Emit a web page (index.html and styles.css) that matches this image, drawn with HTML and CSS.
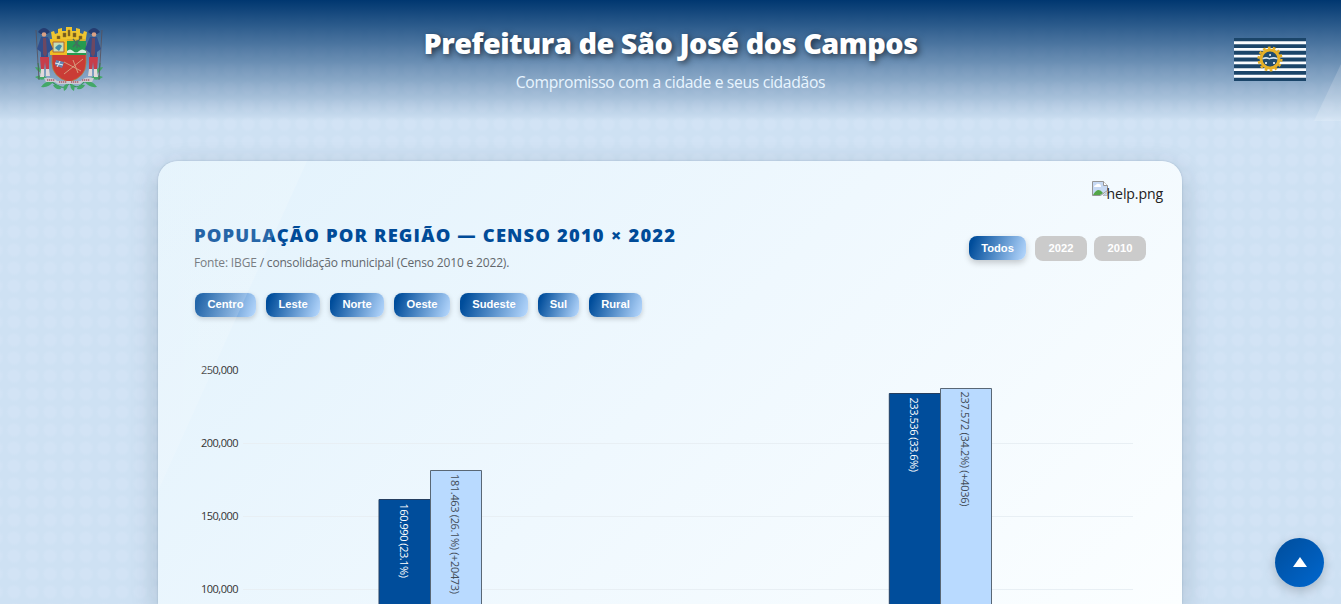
FILE: index.html
```html
<!DOCTYPE html>
<html lang="pt-BR">
<head>
<meta charset="utf-8">
<title>Prefeitura de São José dos Campos</title>
<link rel="stylesheet" href="styles.css">
</head>
<body>
<header class="header">
  <svg class="crest" viewBox="0 0 68 66" aria-label="Brasão">
    <path d="M3 37Q5 53 17 56Q30 66 34 57Q42 65 49 56Q64 54 65 37" fill="none" stroke="#35975c" stroke-width="1.2"/>
    <g fill="#43a868"><path d="M0 41q7 0 8 6q-6-1-8-6M0 51q8-4 12 1q-6 4-12-1M6 61q5-7 12-5q-4 6-12 5M18 59q7-1 8 4q-6 1-8-4M68 41q-7 0-8 6q6-1 8-6M68 51q-8-4-12 1q6 4 12-1M62 61q-5-7-12-5q4 6 12 5M50 59q-7-1-8 4q6 1 8-4M29 65q-2-6 3-7q2 4-3 7M39 65q2-6-3-7q-2 4 3 7"/></g>
    <path d="M18 18L16 6l3-1 1 3 3-1V3l4-1v3h4V1h6v4h4V2l4 1v4l3 1 1-3 3 1-2 12z" fill="#eec530"/>
    <path d="M22 10h3v3h-3zM28 7h3v4h-3zM33 4h2v6h-2zM38 7h3v4h-3zM44 10h3v3h-3zM19 14h31" fill="#725820" stroke="#987822" stroke-width=".5"/>
    <path d="M17 16h34v21q0 14-17 19q-17-5-17-19z" fill="#ca3c36" stroke="#b2863b" stroke-width=".7"/>
    <path d="M15 13h17v16H15z" fill="#f1bd24"/><path d="M18 16h11v10H18z" fill="#c7deb5" stroke="#aa6334"/><path d="M20 22q4-6 7-2l-3 5z" fill="#3f8cab"/>
    <path d="M32 15h19v14H32z" fill="#269b50"/><path d="M32 25q3-3 6 0t6 0t7 0v2H32z" fill="#d5ecdf"/><path d="M38 13l7 8M45 13l-7 8M42 14v8" stroke="#466c60" stroke-width="1.2"/>
    <path d="M29 36l17 9M48 33L29 48M38 34l5 13" stroke="#d79b7c"/><path d="M21 34l8 2-2 6-7-3z" fill="#6485b2"/><path d="M25 35l-3 6M20 37l8 2" stroke="#e9edf0"/>
    <g id="guard"><path d="M1 4l3 50" stroke="#594f58" stroke-width=".8"/><path d="M3 6q6-8 12 0l-3 2H6z" fill="#253c71"/><circle cx="9" cy="8.5" r="2.3" fill="#dba184"/><path d="M6 11h7l5 12-5 4v6H6v-7l-4-3z" fill="#314f8c"/><path d="M8 12h3l1 16-2 3-2-3z" fill="#6d4861"/><path d="M5 31h9v12l-3 1-1-8-1 8H6z" fill="#c73d4b"/><path d="M6 43h3v8H5zM11 43h3l1 7h-4z" fill="#e1d9d9"/></g>
    <use href="#guard" transform="matrix(-1 0 0 1 68 0)"/>
    <path d="M9 52q10-1 13 3h24q3-5 13-3l-2 4H48l-3 2H23l-3-2H11z" fill="#c9cbd2"/><path d="M12 54h8M24 56h8M36 56h8M47 54h8" stroke="#ad5968" stroke-width="1.5" stroke-dasharray="1.3 .7"/>
  </svg>
  <div class="heading">
    <h1>Prefeitura de São José dos Campos</h1>
    <p>Compromisso com a cidade e seus cidadãos</p>
  </div>
  <svg class="flag" viewBox="0 0 72 43" aria-label="Bandeira">
    <path d="M0 0h72v43H0z" fill="#1b4569"/>
    <path d="M0 4.75h72M0 11.45h72M0 18.15h72M0 24.85h72M0 31.55h72M0 38.25h72" stroke="#fafcff" stroke-width="2.8"/>
    <circle cx="36" cy="21" r="11.4" fill="none" stroke="#e6b027" stroke-width="2.3" stroke-dasharray="2.7 2.42"/>
    <circle cx="36" cy="21" r="9" fill="#204b6e" stroke="#e6b027" stroke-width="3"/>
    <path d="M28.5 20q3.5-2 7 0q4-2 8 0v1.5q-4-1.5-8 0q-3-1.5-7 0z" fill="#d8e5ee"/>
    <path d="M35.2 16h1.8v2h-1.8zM31 24h2v2h-2zM39 24h2v2h-2z" fill="#cddae4"/>
  </svg>
</header>
<main class="card">
  <div class="help">
    <svg class="broken" viewBox="0 0 16 16"><path d="M.5 .5h11l4 4v5l-7 5h-8z" fill="#c6d9f4" stroke="#969696"/><path d="M11.5.5v4h4" fill="#fff" stroke="#969696"/><path d="M2 6q0-2 2-2q1-2 3-1q2 0 2 3z" fill="#fff"/><path d="M1 14q5-9 10-2l-3 2H1z" fill="#53a647"/><path d="M15.5 11v3.500H11z" fill="#c6d9f4" stroke="#969696" stroke-width=".5"/></svg><span>help.png</span>
  </div>
  <div class="top">
    <div>
      <h2>POPULAÇÃO POR REGIÃO — CENSO 2010 × 2022</h2>
      <p class="source">Fonte: IBGE / consolidação municipal (Censo 2010 e 2022).</p>
    </div>
    <div class="years"><button class="active">Todos</button><button>2022</button><button>2010</button></div>
  </div>
  <div class="regions">
    <button style="width:61px">Centro</button><button style="width:54px">Leste</button><button style="width:54px">Norte</button><button style="width:56px">Oeste</button><button style="width:68px">Sudeste</button><button style="width:41px">Sul</button><button style="width:53px">Rural</button>
  </div>
  <svg class="chart" viewBox="194 340 952 264">
    <path d="M243 443.5h890M243 516.5h890M243 589.5h890" stroke="#e8eff4"/>
    <g class="axis">
      <text x="201" y="374" textLength="37.5">250,000</text><text x="201" y="447" textLength="37.5">200,000</text>
      <text x="201" y="520" textLength="37.5">150,000</text><text x="201" y="593" textLength="37.5">100,000</text>
    </g>
    <g fill="#004d9b" stroke="#243e60"><path d="M379 499.500h51.500V650H379zM889.300 393.500h51.200V650H889.300z"/></g>
    <g fill="#b9daff" stroke="#596775"><path d="M430.500 470.500h51V650h-51zM940.500 388.500h51V650h-51z"/></g>
    <g class="values">
      <text class="light" transform="translate(400 503.500) rotate(90)" textLength="74.5">160.990 (23.1%)</text>
      <text transform="translate(451 474) rotate(90)" textLength="120">181.463 (26.1%) (+20473)</text>
      <text class="light" transform="translate(910 397.500) rotate(90)" textLength="74.5">233.536 (33.6%)</text>
      <text transform="translate(961 391.500) rotate(90)" textLength="115">237.572 (34.2%) (+4036)</text>
    </g>
  </svg>
</main>
<button class="to-top" aria-label="Voltar ao topo"><svg viewBox="0 0 14 10"><path d="M7 0l7 10H0z" fill="#fff"/></svg></button>
</body>
</html>
```
FILE: styles.css
```css
* { box-sizing: border-box; }
body {
  margin: 0;
  font-family: "Open Sans", "Noto Sans", sans-serif;
  color: #222;
  background: radial-gradient(circle, #d2e3f5 5px, #cee1f3 8px) 5px 7px / 18px 18px;
}
h1, h2, p { margin: 0; white-space: nowrap; }
.header {
  position: relative;
  height: 121px;
  padding: 0 35px;
  display: grid;
  grid-template-columns: 72px 1fr 72px;
  align-items: start;
  background: linear-gradient(#003770, rgba(0, 55, 112, 0));
}
.header::after {
  content: "";
  position: absolute;
  right: 0;
  top: 64px;
  width: 27px;
  height: 57px;
  background: rgba(255, 255, 255, .17);
  clip-path: polygon(100% 0, 100% 100%, 0 100%);
}
.crest { width: 68px; height: 66px; margin-top: 26px; }
.flag { width: 72px; height: 43px; margin-top: 38px; }
.heading { text-align: center; color: #fff; padding-top: 23px; }
.heading h1 { font-size: 28.8px; line-height: 40px; font-weight: 800; letter-spacing: -.46px; text-shadow: 2px 2px 6px rgba(0, 0, 0, .6); }
.heading p { margin-top: 7px; font-size: 15.7px; line-height: 24px; color: #e9f5ff; letter-spacing: -.32px; }
.card {
  position: relative;
  width: 1024px;
  height: 443px;
  margin: 40px 0 0 158px;
  padding: 20px 36px 0;
  border-radius: 20px 20px 0 0;
  background: linear-gradient(135deg, #e2f2fc 0%, #eff8fe 50%, #fbfeff 100%);
  box-shadow: 0 8px 28px rgba(0, 35, 60, .2), 0 0 2px rgba(0, 40, 70, .2);
}
.card::after {
  content: "";
  position: absolute;
  left: 0;
  top: 0;
  width: 149px;
  height: 330px;
  border-radius: 20px 0 0;
  background: linear-gradient(90deg, rgba(255, 255, 255, .13), rgba(255, 255, 255, .17));
  clip-path: polygon(0 0, 100% 0, 0 100%);
}
.help { height: 24px; margin-right: -17px; display: flex; justify-content: flex-end; font-size: 14.1px; line-height: 25px; letter-spacing: -.12px; }
.broken { width: 16px; height: 16px; margin-right: -1px; }
.top { display: flex; justify-content: space-between; height: 85px; }
h2 { margin-top: 17px; font-size: 18.4px; line-height: 26px; font-weight: 800; letter-spacing: 1.14px; color: #004b98; }
.source { margin-top: 6px; font-size: 12px; line-height: 18px; color: #62676c; letter-spacing: -.17px; }
button {
  padding: 0 0 2px;
  border: 0;
  border-radius: 8px;
  font: bold 11.2px "Liberation Sans", Arial, sans-serif;
  color: #fff;
}
.years { display: flex; gap: 7px; padding-top: 31px; }
.years button { width: 52px; height: 25px; background: #cbcbcb; }
.years .active { width: 57px; height: 24px; margin-right: 2px; padding-bottom: 1px; background: linear-gradient(110deg, #004d9b 8%, #b9daff); box-shadow: 0 3px 6px rgba(0, 0, 0, .2); }
.regions { width: 452px; height: 31px; padding: 3px 1px 4px; display: flex; gap: 10px; }
.regions button { flex: none; height: 24px; background: linear-gradient(110deg, #004d9b 8%, #b9daff); box-shadow: 0 2px 5px rgba(0, 0, 0, .18); }
.chart { display: block; width: 952px; height: 264px; margin-top: 19px; }
.axis text { font-size: 11px; fill: #333; }
.values text { font-size: 11px; fill: #424c57; }
.values .light { fill: #fff; }
.to-top {
  position: fixed;
  left: 1275px;
  top: 538px;
  width: 49px;
  height: 49px;
  border-radius: 50%;
  display: grid;
  place-items: center;
  background: linear-gradient(135deg, #004d9b, #0067cf);
  box-shadow: 0 4px 12px rgba(0, 0, 0, .2);
}
.to-top svg { width: 14px; height: 10px; }
```
